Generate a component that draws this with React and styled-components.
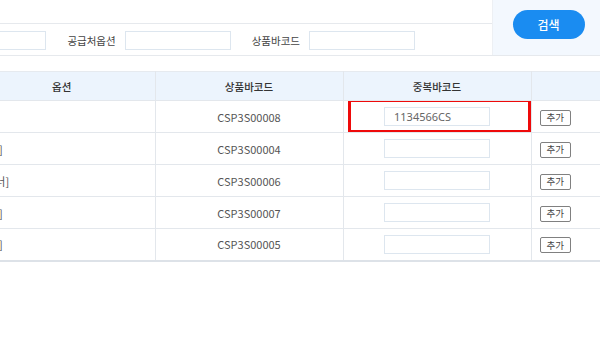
import React from 'react'
import styled, { createGlobalStyle } from 'styled-components'

const GlobalStyle = createGlobalStyle`
    html, body {
        margin: 0;
        padding: 0;
        background: #fff;
        font-family: "Noto Sans CJK KR", "Noto Sans", sans-serif;
        overflow: hidden;
    }
    * { box-sizing: border-box; }
`;

const rows = [
    { option: '[S]', barcode: 'CSP3S00008', dup: '1134566CS', marked: true },
    { option: '[블랙]', barcode: 'CSP3S00004', dup: '' },
    { option: '[XL/너]', barcode: 'CSP3S00006', dup: '' },
    { option: '[레드]', barcode: 'CSP3S00007', dup: '' },
    { option: '[블루]', barcode: 'CSP3S00005', dup: '' },
];

function App() {
    return (
        <>
            <GlobalStyle />
            <Page>
                <SearchArea>
                    <FilterBox>
                        <FilterRow $top />
                        <FilterRow>
                            <FilterGroup>
                                <Label>공급처</Label>
                                <TextInput />
                            </FilterGroup>
                            <FilterGroup>
                                <Label>공급처옵션</Label>
                                <TextInput />
                            </FilterGroup>
                            <FilterGroup>
                                <Label>상품바코드</Label>
                                <TextInput />
                            </FilterGroup>
                        </FilterRow>
                    </FilterBox>
                    <ButtonPanel>
                        <SearchButton>검색</SearchButton>
                    </ButtonPanel>
                </SearchArea>

                <TableWrap>
                    <Table>
                        <colgroup>
                            <col style={{ width: 186 }} />
                            <col style={{ width: 188 }} />
                            <col style={{ width: 188 }} />
                            <col />
                        </colgroup>
                        <thead>
                            <tr>
                                <Th>옵션</Th>
                                <Th>상품바코드</Th>
                                <Th>중복바코드</Th>
                                <Th />
                            </tr>
                        </thead>
                        <tbody>
                            {rows.map((r) => (
                                <tr key={r.barcode}>
                                    <Td $align="left" $pad="6px">{r.option}</Td>
                                    <Td>{r.barcode}</Td>
                                    <Td $rel>
                                        <CellInput defaultValue={r.dup} />
                                        {r.marked && <Highlight />}
                                    </Td>
                                    <Td $align="left" $pad="8px">
                                        <AddButton>추가</AddButton>
                                    </Td>
                                </tr>
                            ))}
                        </tbody>
                    </Table>
                </TableWrap>
            </Page>
        </>
    )
}

const Page = styled.div`
    width: 600px;
    display: flex;
    flex-direction: column;
`;

const SearchArea = styled.div`
    display: flex;
    height: 56px;
    border-bottom: 1px solid #e6e9ed;
`;

const FilterBox = styled.div`
    flex: 1;
    display: flex;
    flex-direction: column;
    overflow: hidden;
    border-right: 1px solid #edf0f4;
`;

const FilterRow = styled.div`
    display: flex;
    align-items: center;
    justify-content: flex-end;
    gap: 21px;
    padding-right: 77px;
    height: ${p => (p.$top ? '24px' : '32px')};
    border-bottom: ${p => (p.$top ? '1px solid #e6e9ed' : 'none')};
    flex-shrink: 0;
`;

const FilterGroup = styled.div`
    display: flex;
    align-items: center;
    gap: 9px;
    flex-shrink: 0;
`;

const Label = styled.span`
    font-size: 10.5px;
    color: #444;
    white-space: nowrap;
`;

const TextInput = styled.input`
    width: 106px;
    height: 19px;
    border: 1px solid #dde6ef;
    background: #fff;
    outline: none;
`;

const ButtonPanel = styled.div`
    width: 107px;
    background: #f3f8fe;
    display: flex;
    justify-content: center;
    padding-top: 10px;
    padding-left: 4px;
`;

const SearchButton = styled.button`
    width: 72px;
    height: 29px;
    border: none;
    border-radius: 15px;
    background: #1a8cf1;
    color: #fff;
    font-family: inherit;
    font-size: 12px;
    font-weight: 500;
`;

const TableWrap = styled.div`
    margin-top: 15px;
    overflow: hidden;
`;

const Table = styled.table`
    margin-left: -31px;
    width: 631px;
    border-collapse: collapse;
    table-layout: fixed;
    border-top: 1px solid #e6eaef;
    border-bottom: 2px solid #dde2e8;
`;

const Th = styled.th`
    height: 29px;
    background: #ecf4fd;
    font-size: 10.5px;
    font-weight: 500;
    color: #333;
    text-align: center;
    border-bottom: 1px solid #e3e7ec;
    border-left: 1px solid #e3e7ec;
    padding: 0;
    &:first-child { border-left: none; }
`;

const Td = styled.td`
    position: ${p => (p.$rel ? 'relative' : 'static')};
    height: 32px;
    font-size: 11px;
    color: #555;
    text-align: ${p => p.$align || 'center'};
    padding: 0 0 0 ${p => p.$pad || '0'};
    border-bottom: 1px solid #e3e7ec;
    border-left: 1px solid #e3e7ec;
    white-space: nowrap;
    overflow: hidden;
    &:first-child { border-left: none; }
    tr:last-child & { border-bottom: none; }
`;

const CellInput = styled.input`
    width: 106px;
    height: 19px;
    border: 1px solid #dde6ef;
    padding: 0 9px;
    font-family: "Noto Sans", sans-serif;
    font-size: 11px;
    color: #666;
    outline: none;
    vertical-align: middle;
`;

const Highlight = styled.div`
    position: absolute;
    left: 4px;
    right: 0;
    top: -2px;
    bottom: -1px;
    border: 3px solid #ee0a0a;
    pointer-events: none;
`;

const AddButton = styled.button`
    height: 16px;
    padding: 0 6px;
    border: 1px solid #808080;
    border-radius: 2px;
    background: #fff;
    font-family: inherit;
    font-size: 9.5px;
    line-height: 13px;
    color: #444;
    vertical-align: middle;
`;

export default App
